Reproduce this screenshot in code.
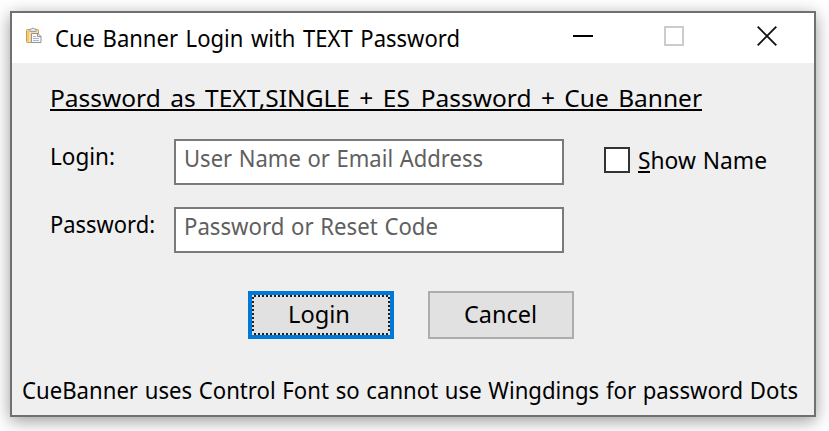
<script>
  // Condenses a label horizontally so that it fills the given width.
  function fit(node, width) {
    const natural = node.getBoundingClientRect().width;
    node.style.transform = `scaleX(${width / natural})`;
  }
</script>

<div class="desktop">
  <main class="window">
    <header>
      <svg class="app-icon" width="18" height="18" viewBox="0 0 18 18">
        <rect x="1.500" y="2.500" width="12" height="13" rx="1" fill="#fbdc98" stroke="#cf9b45" />
        <path d="M3 3.500v11" stroke="#f3c877" stroke-width="2" />
        <path d="M5 4.500v-2.500h1.500l.5-.8h2l.5.8h1.500v2.500z" fill="#e4e7ea" stroke="#8b9198" stroke-width=".8" />
        <path d="M6.500 6.500h6.500l3 3v6h-9.500z" fill="#f6f8fb" stroke="#8e939c" />
        <path d="M12.500 6.500v3h3.500" fill="none" stroke="#8e939c" />
        <path d="M8 9.500h3M8 11.500h6M8 13.500h6" stroke="#a9b7cb" />
      </svg>
      <div class="title"><span class="t" use:fit={405}>Cue Banner Login with TEXT Password</span></div>
      <div class="controls">
        <svg width="20" height="22" viewBox="0 0 20 22"><path d="M0 11h20" stroke="#000" stroke-width="2" /></svg>
        <svg width="20" height="22" viewBox="0 0 20 22"><rect x="1" y="2" width="18" height="18" fill="none" stroke="#ccc" stroke-width="2" /></svg>
        <svg class="close" width="20" height="22" viewBox="0 0 20 22"><path d="M.7 1.700L19.300 20.300M19.300 1.700L.7 20.300" stroke="#111" stroke-width="1.900" /></svg>
      </div>
    </header>

    <div class="body">
      <h1><span class="t" use:fit={652}>Password as TEXT,SINGLE + ES_Password + Cue Banner</span></h1>

      <div class="row">
        <div class="label"><span class="t" use:fit={65}>Login:</span></div>
        <div class="field"><span class="t" use:fit={299}>User Name or Email Address</span></div>
        <div class="check">
          <i class="box"></i>
          <div class="check-label"><span class="t" use:fit={129}>Show Name</span></div>
        </div>
      </div>
      <div class="row">
        <div class="label"><span class="t" use:fit={105}>Password:</span></div>
        <div class="field"><span class="t" use:fit={254}>Password or Reset Code</span></div>
      </div>

      <div class="buttons">
        <div class="button primary"><div class="focus"></div><span class="t" use:fit={62}>Login</span></div>
        <div class="button"><span class="t" use:fit={73}>Cancel</span></div>
      </div>

      <footer><span class="t" use:fit={776}>CueBanner uses Control Font so cannot use Wingdings for password Dots</span></footer>
    </div>
  </main>
</div>

<style>
  :global(body) { background: #fff; overflow: hidden; }
  .desktop {
    box-sizing: border-box;
    width: 829px;
    height: 431px;
    padding: 11px 13px 14px 10px;
    overflow: hidden;
    font: 24px/32px "Noto Sans", "Open Sans", sans-serif;
    color: #000;
  }
  .window {
    box-sizing: border-box;
    display: flex;
    flex-direction: column;
    height: 406px;
    border: 2px solid #707070;
    background: #efefef;
    box-shadow: 0 4px 16px rgba(0, 0, 0, .4);
  }
  .t {
    display: inline-block;
    white-space: nowrap;
    word-spacing: 1px;
    transform-origin: 0 0;
  }
  header {
    display: flex;
    align-items: center;
    height: 50px;
    padding-left: 13px;
    background: #fff;
  }
  .app-icon { flex: none; margin-top: -4px; }
  .title { width: 518px; padding-left: 12px; box-sizing: border-box; }
  .title .t { word-spacing: 2px; }
  .controls { display: flex; gap: 71px; margin-left: 12px; margin-top: -4px; }
  .controls svg { display: block; }
  .controls .close { margin-left: 2px; }
  .body { flex: 1; }
  h1 {
    box-sizing: border-box;
    width: 652px;
    height: 29px;
    margin: 19px 0 0 38px;
    border-bottom: 2px solid #000;
    font: inherit;
  }
  h1 .t { word-spacing: 3px; }
  .row {
    display: flex;
    height: 46px;
    margin: 28px 0 0 38px;
  }
  .row + .row { margin-top: 22px; }
  .label { width: 124px; padding-top: 1px; }
  .field {
    box-sizing: border-box;
    width: 390px;
    height: 46px;
    padding: 1px 0 0 8px;
    border: 2px solid #7a7a7a;
    background: #fff;
    color: #606060;
  }
  .check { display: flex; margin-left: 40px; }
  .box {
    box-sizing: border-box;
    width: 26px;
    height: 26px;
    margin-top: 8px;
    border: 2px solid #333;
    background: #fff;
  }
  .check-label {
    height: 32px;
    margin: 5px 0 0 8px;
    background: linear-gradient(#000, #000) 0 27px / 12px 2px no-repeat;
  }
  .buttons {
    display: flex;
    gap: 34px;
    margin: 38px 0 0 236px;
  }
  .button {
    position: relative;
    box-sizing: border-box;
    width: 146px;
    height: 48px;
    padding: 5px 0 0 34px;
    border: 2px solid #adadad;
    background: #e1e1e1;
  }
  .primary { padding: 3px 0 0 36px; border: 4px solid #0078d7; }
  .focus {
    position: absolute;
    inset: 0;
    background:
      repeating-linear-gradient(90deg, #e1e1e1 0 2px, #1e1e1e 2px 4px) 0 0 / 100% 2px no-repeat,
      repeating-linear-gradient(90deg, #e1e1e1 0 2px, #1e1e1e 2px 4px) 0 100% / 100% 2px no-repeat,
      repeating-linear-gradient(#e1e1e1 0 2px, #1e1e1e 2px 4px) 0 0 / 2px 100% no-repeat,
      repeating-linear-gradient(#e1e1e1 0 2px, #1e1e1e 2px 4px) 100% 0 / 2px 100% no-repeat;
  }
  .button .t { position: relative; }
  footer { margin: 35px 0 0 10px; }
</style>
